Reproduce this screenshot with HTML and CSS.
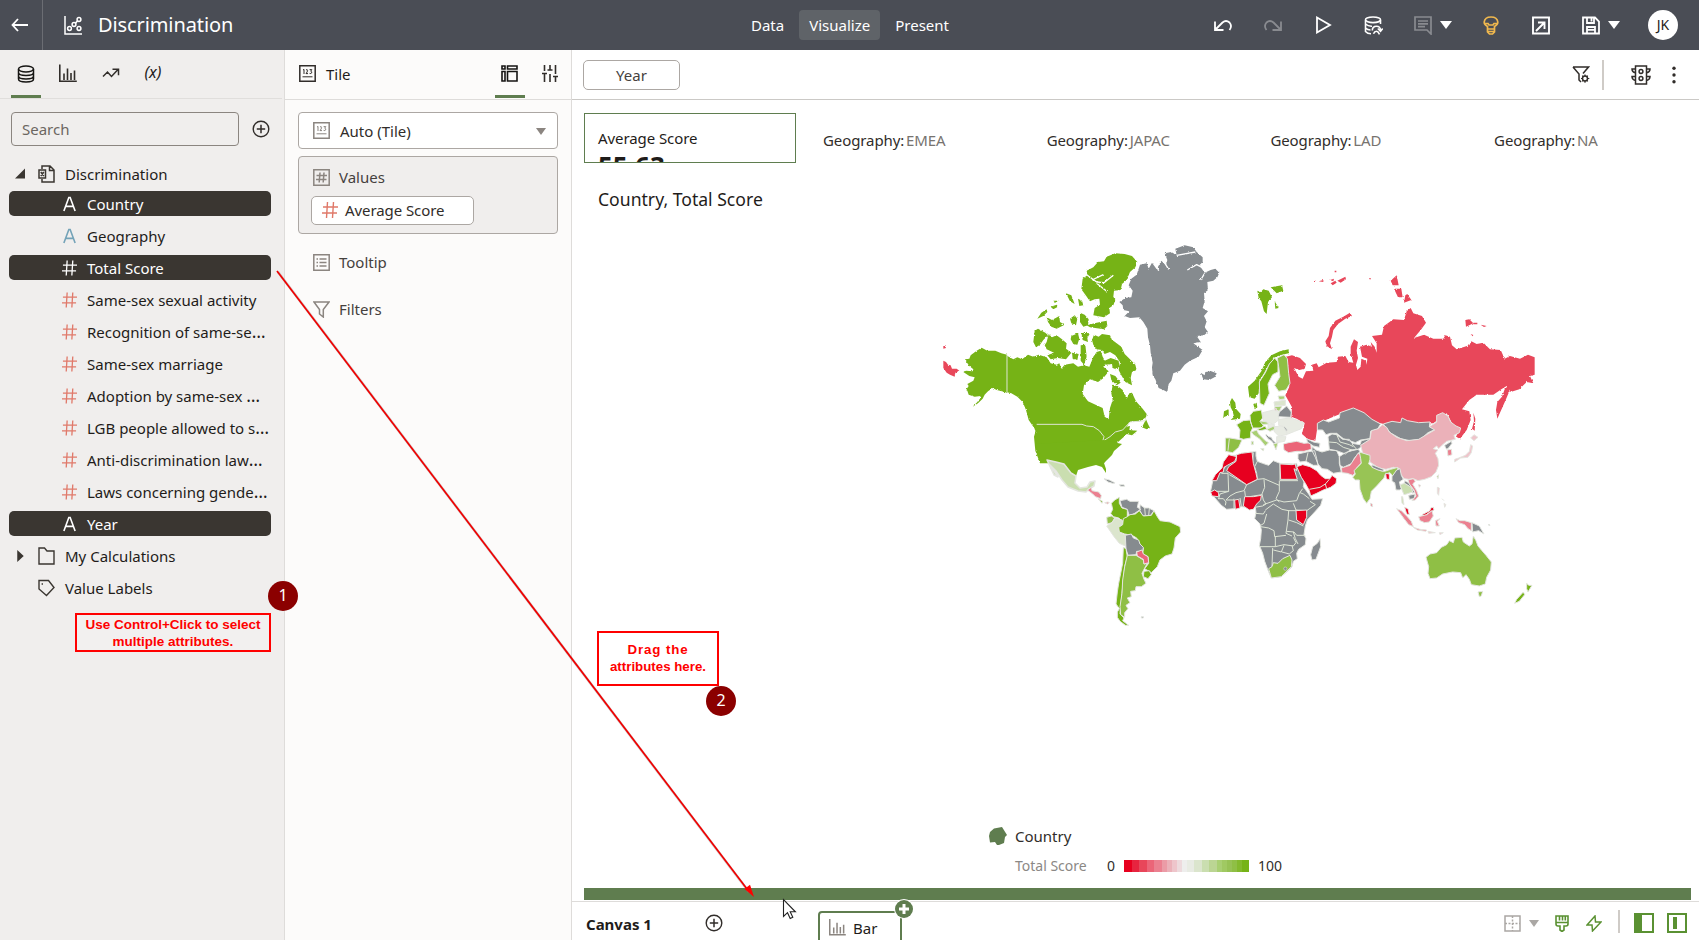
FILE: index.html
```html
<!DOCTYPE html>
<html lang="en">
<head>
<meta charset="utf-8">
<title>Discrimination</title>
<link rel="stylesheet" href="styles.css">
</head>
<body>
<svg class="defs" width="0" height="0">
  <symbol id="i-hash" viewBox="0 0 16 16"><path d="M5.5 0L4.5 16M11.5 0L10.500 16M1 5h15M0 11h15" fill="none" stroke="currentColor" stroke-width="1.4"/></symbol>
  <symbol id="i-attr" viewBox="0 0 16 16"><path d="M2 15.500L7.300 1h1.400L14 15.500M4 10.500h8" fill="none" stroke="currentColor" stroke-width="1.700"/></symbol>
  <symbol id="i-tile" viewBox="0 0 17 17"><path d="M.8 .8h15.400v15.400H.8z" fill="none" stroke="currentColor" stroke-width="1.500"/><path d="M4 5l1-.6V9M7 5q1.500-1 1.600.3Q8.500 7 7 8.600h2M10.600 4.600h2.200l-1.100 1.600q1.500.3 1 1.700-.6 1-2.100.5M3.500 11.800h10" fill="none" stroke="currentColor"/></symbol>
  <symbol id="i-bars" viewBox="0 0 18 18"><path d="M.8 .5v16.700h17M5 16V9.500M8.500 16V4.500M12 16V9M15.500 16V6.500" fill="none" stroke="currentColor" stroke-width="1.600"/></symbol>
  <symbol id="i-add" viewBox="0 0 18 18"><circle cx="9" cy="9" r="7.800" fill="none" stroke="currentColor" stroke-width="1.400"/><path d="M9 4.800v8.400M4.800 9h8.400" stroke="currentColor" stroke-width="1.500"/></symbol>
</svg>

<header class="topbar">
  <div class="back"><svg width="17" height="14" viewBox="0 0 17 14"><path d="M7 1L1.500 7 7 13M1.500 7H17" fill="none" stroke="#fff" stroke-width="1.800"/></svg></div>
  <svg class="logo" width="19" height="19" viewBox="0 0 19 19" fill="none" stroke="#fff" stroke-width="1.500"><path d="M1 0v18h17"/><circle cx="5.500" cy="12.500" r="1.900"/><circle cx="10" cy="8.500" r="1.900"/><circle cx="15" cy="3.500" r="1.900"/><circle cx="15" cy="12.500" r="1.900"/><path d="M11.400 7.100l2.200-2.200"/></svg>
  <h1>Discrimination</h1>
  <nav class="modes"><span>Data</span><span class="on">Visualize</span><span>Present</span></nav>
  <div class="tools">
    <svg class="t1" width="20" height="20" viewBox="0 0 20 20" fill="none" stroke="#fff" stroke-width="1.800"><path d="M2 6.500V15h8.500M2.500 14.500L9.500 7.500Q13 4.500 16.500 7.500 19.500 11 16.500 15"/></svg>
    <svg class="t2" width="20" height="20" viewBox="0 0 20 20" fill="none" stroke="#898b90" stroke-width="1.800"><path d="M18 6.500V15H9.500M17.500 14.500L10.500 7.500Q7 4.500 3.500 7.500 .5 11 3.500 15"/></svg>
    <svg class="t3" width="16" height="18" viewBox="0 0 16 18" fill="none" stroke="#fff" stroke-width="1.800"><path d="M1 1.500L14 9 1 16.500z"/></svg>
    <svg class="t4" width="19" height="19" viewBox="0 0 19 19" fill="none" stroke="#fff" stroke-width="1.600"><ellipse cx="9" cy="3.800" rx="7.500" ry="2.800"/><path d="M1.500 4v11.500q2 2.300 5.500 2.300M16.500 4v4M1.500 8q3 2.500 6.500 2.200M1.500 12q2 2 5 2M8.300 14.500q0-4.300 4.200-4.300 3.800 0 4 4M13.800 12.500l2.700 2.700 2.200-2.700M9.500 17.800q1-2.500 3-2.500 1.500 0 3 3"/></svg>
    <svg class="t5" width="18" height="19" viewBox="0 0 18 19" fill="none" stroke="#898b90" stroke-width="1.700"><path d="M1 1h16v17l-4-4H1zM4 5h10M4 7.800h10M4 10.600h7"/></svg>
    <i class="caret c1"></i>
    <svg class="t6" width="16" height="19" viewBox="0 0 16 19" fill="none" stroke="#f0b84e" stroke-width="1.700"><path d="M4.500 13V10.500Q1 8.500 1.200 6 1.800 1 8 1t6.800 5q.2 2.500-3.300 4.500V13zM2.500 7.500h2.500l1 1.500h4l1-1.500h2.500M4.500 13v3l2 2h3l2-2v-3M5 15.500h6"/></svg>
    <svg class="t7" width="18" height="19" viewBox="0 0 18 19" fill="none" stroke="#fff" stroke-width="1.900"><path d="M1 1.500h16v16H1zM6 6.500h6.500V13M12.500 6.500L4 15"/></svg>
    <svg class="t8" width="18" height="19" viewBox="0 0 18 19" fill="none" stroke="#fff" stroke-width="1.800"><path d="M1 1.500h12l4 4v12H1zM5 2v5h7V2M9.500 2.500v3M5 17v-6h8v6M5 13.800h8"/></svg>
    <i class="caret c2"></i>
    <b class="avatar">JK</b>
  </div>
</header>

<main>
  <aside class="data">
    <div class="tabs">
      <span class="tab on"><svg width="18" height="18" viewBox="0 0 18 18" fill="none" stroke="#161513" stroke-width="1.500"><ellipse cx="9" cy="4" rx="7.500" ry="3"/><path d="M1.500 4v10c0 4 15 4 15 0V4M1.500 7.500c0 4 15 4 15 0M1.500 11c0 4 15 4 15 0"/></svg></span>
      <span class="tab"><svg width="18" height="18" color="#312d2a"><use href="#i-bars"/></svg></span>
      <span class="tab"><svg width="18" height="18" viewBox="0 0 18 18" fill="none" stroke="#312d2a" stroke-width="1.500"><path d="M1 12.500l4.500-4.500L9.500 12.500 16 5.500M10.500 5.300h6v6"/></svg></span>
      <span class="tab fx">(x)</span>
    </div>
    <div class="find"><div class="search">Search</div><svg width="18" height="18" color="#312d2a"><use href="#i-add"/></svg></div>
    <ul class="tree">
      <li class="root first"><svg class="arrow" width="11" height="11" viewBox="0 0 11 11"><path d="M10 0v10H0z" fill="#3a3631"/></svg><svg class="ric" width="17" height="18" viewBox="0 0 17 18" fill="none" stroke="#3a3631" stroke-width="1.500"><path d="M4 4V1h8l4 4v12H4v-3M11.500 1v4.500H16M1 5h6.500v8H1zM2.800 7l3 4M5.800 7l-3 4"/></svg>Discrimination</li>
      <li class="sel"><svg><use href="#i-attr"/></svg><span>Country</span></li>
      <li class="a"><svg><use href="#i-attr"/></svg><span>Geography</span></li>
      <li class="sel"><svg><use href="#i-hash"/></svg><span>Total Score</span></li>
      <li><svg><use href="#i-hash"/></svg><span>Same-sex sexual activity</span></li>
      <li><svg><use href="#i-hash"/></svg><span>Recognition of same-se<i>…</i></span></li>
      <li><svg><use href="#i-hash"/></svg><span>Same-sex marriage</span></li>
      <li><svg><use href="#i-hash"/></svg><span>Adoption by same-sex <i>…</i></span></li>
      <li><svg><use href="#i-hash"/></svg><span>LGB people allowed to s<i>…</i></span></li>
      <li><svg><use href="#i-hash"/></svg><span>Anti-discrimination law<i>…</i></span></li>
      <li><svg><use href="#i-hash"/></svg><span>Laws concerning gende<i>…</i></span></li>
      <li class="sel"><svg><use href="#i-attr"/></svg><span>Year</span></li>
      <li class="root"><svg class="arrow" width="11" height="13" viewBox="0 0 11 13"><path d="M2 0l7 6.500L2 13z" fill="#3a3631"/></svg><svg class="ric" width="17" height="18" viewBox="0 0 17 18" fill="none" stroke="#3a3631" stroke-width="1.400"><path d="M1 1h5.500l2.500 3h7v13H1z"/></svg>My Calculations</li>
      <li class="root"><svg class="arrow" width="11" height="11"></svg><svg class="ric" width="17" height="18" viewBox="0 0 17 18" fill="none" stroke="#3a3631" stroke-width="1.400"><path d="M1 1.500h9.500l5.500 7-7.500 8L1 10z"/><path d="M4.300 4.300v1.400"/></svg>Value Labels</li>
    </ul>
  </aside>

  <aside class="grammar">
    <div class="ghead">
      <svg width="17" height="17" color="#312d2a"><use href="#i-tile"/></svg><span class="gt">Tile</span>
      <span class="tab on"><svg width="17" height="17" viewBox="0 0 17 17" fill="none" stroke="#161513" stroke-width="1.600"><path d="M1 1h3v3H1zM6.500 1H16v3H6.500zM1 6.500h3V16H1zM6.500 6.500H16V16H6.500z"/></svg></span>
      <svg class="sliders" width="16" height="17" viewBox="0 0 16 17" fill="none" stroke="#312d2a" stroke-width="1.600"><path d="M2.500 0v6M2.500 8v9M0 8.500h5M8 0v4M8 9v8M5.500 5h5M8 3v2M13.500 0v9M13.500 11v6M11 11.500h5"/></svg>
    </div>
    <div class="select"><svg width="17" height="17" color="#8b8580"><use href="#i-tile"/></svg><span>Auto (Tile)</span><i class="caret"></i></div>
    <div class="values">
      <div class="row"><svg width="17" height="17" viewBox="0 0 17 17" fill="none" stroke="#8b8580" stroke-width="1.500"><path d="M.8 .8h15.400v15.400H.8zM7 3.500l-.8 10M11 3.500l-.8 10M3.500 6.500h10.500M3 10.500h10.500"/></svg><span>Values</span></div>
      <div class="chip"><svg width="16" height="16" color="#e0796a"><use href="#i-hash"/></svg><span>Average Score</span></div>
    </div>
    <div class="row tip"><svg width="17" height="17" viewBox="0 0 17 17" fill="none" stroke="#8b8580" stroke-width="1.500"><path d="M.8 .8h15.400v15.400H.8zM3.500 5h1.500M6.500 5h7M3.500 8.500h1.500M6.500 8.500h7M3.500 12h1.500M6.500 12h7"/></svg><span>Tooltip</span></div>
    <div class="row flt"><svg width="17" height="17" viewBox="0 0 17 17" fill="none" stroke="#8b8580" stroke-width="1.500"><path d="M1 1h15L10.300 8.500V16L6.500 13V8.500z"/></svg><span>Filters</span></div>
  </aside>

  <section class="canvas">
    <div class="filterbar">
      <span class="pill">Year</span>
      <div class="fic">
        <svg width="18" height="18" viewBox="0 0 18 18" fill="none" stroke="#312d2a" stroke-width="1.500"><path d="M1 1h15.500L11 7.500M1 1l6 7v6l2 2"/><circle cx="13" cy="12.500" r="2.500"/><path d="M13 8.500v1.500M13 15v1.800M9 12.500h1.500M15.500 12.500h1.800M10.200 9.700l1 1M14.800 14.300l1 1M15.800 9.700l-1 1M11.200 14.300l-1 1" stroke-width="1.200"/></svg>
        <i class="sep"></i>
        <svg class="light" width="20" height="20" viewBox="0 0 20 20" fill="none" stroke="#312d2a" stroke-width="1.500"><path d="M4.500 1h11v18h-11zM4.500 4H1q0 3 3.500 4M15.500 4H19q0 3-3.500 4M4.500 11.500H1q0 3 3.500 4M15.500 11.500H19q0 3-3.500 4"/><circle cx="10" cy="6.500" r="1.900"/><circle cx="10" cy="13.500" r="1.900"/></svg>
        <svg width="4" height="18" viewBox="0 0 4 18" fill="#312d2a"><circle cx="2" cy="2.300" r="1.700"/><circle cx="2" cy="9" r="1.700"/><circle cx="2" cy="15.700" r="1.700"/></svg>
      </div>
    </div>
    <div class="tiles">
      <div class="kpi"><div class="lbl">Average Score</div><div class="num">55.63</div></div>
      <div class="geo">Geography: <em>EMEA</em></div><div class="geo">Geography: <em>JAPAC</em></div><div class="geo">Geography: <em>LAD</em></div><div class="geo">Geography: <em>NA</em></div>
    </div>
    <h2>Country, Total Score</h2>
    <svg class="map" width="1108" height="410" viewBox="584 220 1108 410">
      <defs><filter id="coast" x="0" y="0" width="100%" height="100%"><feTurbulence type="fractalNoise" baseFrequency=".22" numOctaves="2" seed="4"/><feDisplacementMap in="SourceGraphic" scale="7" xChannelSelector="R" yChannelSelector="G"/></filter></defs>
      <!-- North America, Greenland, Iceland -->
      <g transform="translate(930 230) scale(.33333)">
        <g filter="url(#coast)">
        <path class="ru" d="M40 392L48 396 54 404 62 406 66 416 80 416 88 422 76 428 74 440 60 434 50 428 40 414ZM40 348h6l2 6-8 2z"/>
        <path class="g1" d="M105 388L118 386 122 376 140 362 155 353 172 362 196 362 214 370 231 374 231 488 216 484 200 480 188 474 174 484 164 494 158 506 144 520 126 532 140 518 150 506 152 498 134 500 116 494 112 482 108 480 116 468 112 462 130 452 134 442 118 438 100 426 108 422 128 424 130 418 118 408 108 394Z"/>
        <path class="g1" d="M228 376L250 388 262 382 276 388 294 374 310 380 326 374 350 382 362 400 380 404 388 400 394 416 404 404 430 400 444 410 462 406 478 410 484 396 490 380 500 366 512 362 518 380 528 398 520 410 536 424 528 434 518 446 504 456 480 448 462 466 458 492 474 514 500 526 518 534 524 560 536 568 540 534 548 510 544 490 548 464 566 470 578 480 590 506 598 490 606 488 618 514 638 536 650 552 648 562 630 574 600 576 590 590 600 588 598 600 622 602 606 616 590 612 582 620 560 640 520 662 520 700H330L316 662 312 620 316 606 314 596 296 570 288 540 278 516 262 500 244 490 228 486Z"/>
        <path class="g1" d="M636 592L648 568 654 582 660 594 650 598ZM486 330L492 314 506 320 516 312 540 316 546 330 552 334 574 350 584 372 600 388 616 404 620 420 606 426 602 444 606 466 586 456 574 436 566 420 570 396 556 376 540 366 524 372 516 360 500 358 490 344ZM524 392L542 384 566 392 568 410 558 418 548 414 546 402 526 404ZM540 432L556 438 572 458 560 466 544 450Z"/>
        <path class="g1" d="M356 312L366 322 380 316 396 328 410 340 408 356 424 368 408 388 384 384 362 388 352 376 372 368 350 358 344 346 350 336ZM314 302L324 296 346 308 354 316 340 330 330 344 318 352 310 336ZM424 318l20-8 4 16-6 18-12-2-8-14zM454 308L480 310 472 324 474 336 458 330ZM452 346L466 344 470 380 462 404 452 392ZM426 368l20 4-4 18-14-4z"/>
        <path class="g1" d="M470 286L500 278 530 272 532 288 522 298 480 292ZM450 248l14 6 12 14-2 18-14 4-10-14zM350 262L366 270 388 258 390 276 404 284 380 296 364 290 354 276ZM322 266L334 248 350 238 352 246 340 258ZM420 266l14-10 8 10-4 20-14-6zM408 190L424 196 434 222 420 214ZM444 206l12 6 4 14-12 2zM370 212h14l-8 6zM362 230l18-6 4 6-14 8z"/>
        <path class="g1" d="M458 146L472 136 470 122 490 112 504 96 522 94 530 80 556 70 584 72 606 78 622 96 616 112 600 126 590 150 576 162 572 180 552 182 550 200 556 210 550 226 538 234 540 250 522 262 490 256 494 234 510 224 508 206 494 208 480 214 466 194 454 178Z"/>
        <path class="cut" d="M470 134L500 156 522 158 550 136M500 160L530 184M486 150L520 134"/>
        <path class="na" d="M568 216L586 204 604 202 608 182 596 166 604 146 620 134 630 104 650 100 656 116 666 98 680 118 694 92 708 106 712 90 704 70 724 66 740 76 736 56 764 46 790 52 800 66 818 82 818 96 808 106 824 128 842 120 856 116 868 128 862 142 850 152 832 156 834 180 822 190 824 214 818 234 834 244 822 258 830 274 824 292 834 306 822 316 800 318 812 336 790 340 818 360 806 380 780 392 764 404 750 422 730 430 724 452 716 462 712 486 700 480 686 474 676 448 668 436 666 412 668 398 662 368 660 346 654 322 652 296 640 276 628 262 600 264 584 258 598 244 580 240 578 226Z"/>
        <path class="cut" d="M740 76L796 66M772 120L800 104 816 112M812 150L824 130M700 92L716 118M676 100L686 122"/>
        <path class="na" d="M812 428L824 436 826 426 844 424 860 430 856 440 838 450 820 448Z"/>
        </g>
        <path class="bd" d="M231 374V486M320 583H456L470 588 490 590 508 602 522 620 518 634 540 620 556 606 578 600 600 576 648 572"/>
      </g>
      <path class="g1 plain" d="M1035 444L1037 449 1041 454 1047 460 1056 462 1064 464 1071 473 1076 476 1078 470 1088 467 1096 465 1102 467 1106 473 1106 469 1104 463 1107 460 1112 455 1114 451 1122 444 1104 440Z"/>
      <path class="g5" d="M1047 460L1056 462 1064 464 1071 473 1076 476 1075 483 1080 488 1087 487 1090 482 1095 481 1094 486 1089 489 1086 492 1078 491 1068 487 1062 480 1056 471 1050 465 1058 477 1054 475Z"/>
      <!-- South America, Africa, Arabia -->
      <g transform="translate(1080 420) scale(.33333)">
        <path class="p3" d="M22 210L34 202 36 212 56 216 64 226 62 236 46 230 38 222ZM74 248l8 4 6-4-4-2z"/>
        <path class="g2" d="M54 236l14 8-2 6z"/>
        <path class="na" d="M72 176L88 180 104 188 102 191 84 186ZM118 194h14l2 5h-12z"/>
        <path class="g1" d="M94 250L104 240 118 232 118 250 126 264 142 268 142 290 128 304 116 294 100 290 92 280 98 268Z"/>
        <path class="na" d="M120 242L140 238 150 244 176 244 172 262 182 268 164 280 148 288 142 268 126 262ZM180 254L194 264 206 264 222 272 212 286 188 288 180 272Z"/>
        <path class="bd" d="M194 264L196 286M208 266L206 286"/>
        <path class="g2" d="M80 292L94 288 104 294 96 308 82 312Z"/>
        <path class="g6" d="M80 318L96 308 106 294 126 300 130 312 116 324 122 340 136 344 136 378 118 370 102 350Z"/>
        <path class="g1" d="M130 296L142 290 150 284 166 282 178 272 190 288 214 286 222 272 232 290 240 302 270 306 300 320 302 336 286 354 282 384 276 402 256 408 240 420 232 440 214 458 194 446 206 430 204 410 188 402 190 384 180 374 170 354 156 346 134 342 118 336 116 322 128 314Z"/>
        <path class="na" d="M136 346L154 342 160 354 176 360 180 372 190 382 188 394 170 394 168 404 144 406 138 388Z"/>
        <path class="g1" d="M192 454L208 452 214 464 204 476 190 470ZM130 382L138 386 142 410 134 440 130 480 126 520 122 560 120 582 132 594 128 602 146 616 136 616 120 604 112 592 112 576 118 566 108 552 112 516 116 490 122 460 128 430Z"/>
        <path class="g2" d="M142 406L168 406 190 420 192 432 202 430 192 448 186 460 192 478 198 490 184 500 168 500 166 512 152 514 154 530 142 534 150 548 138 556 144 566 134 578 134 592 122 584 120 560 126 520 128 480 134 440Z"/>
        <path class="p2" d="M170 396L186 390 190 402 204 410 206 428 192 432 190 418 172 408Z"/>
        <path class="na" d="M436 140L440 120 452 106 468 106 484 100 516 96 528 94 528 108 532 124 548 130 566 136 580 122 600 130 640 132 650 130 656 152 672 186 670 200 686 222 696 238 728 236 722 256 706 274 682 300 676 318 672 344 678 356 676 374 656 388 650 400 652 416 640 424 636 440 620 456 604 470 574 474 566 456 554 424 548 400 538 376 542 356 544 330 540 312 524 296 528 278 526 262 512 268 500 262 484 260 462 266 440 268 424 256 410 240 398 226 392 212 398 184 416 158 430 148ZM720 356L722 380 708 418 696 420 692 404 698 380 712 370ZM184 590h6v4h-6z"/>
        <path class="bd" d="M398 214L446 214 444 158M424 160H444M448 164L500 194 532 178 552 176 598 196M532 124L524 140 530 160 532 178M520 98L518 120M600 130V182H654M598 182V214L588 236 598 246M552 178L554 202 546 222 550 240 558 252 548 258 524 262M500 194L492 212 468 218 450 228 438 240M446 214L420 222 416 236M494 212L496 228M414 236L430 236 438 246 436 256M438 240H462M462 236V264M480 234L484 260M546 224L496 232M590 240L612 246 650 242 658 220 668 206M550 254L590 240M556 270L580 252 606 268 626 272M526 280L550 282 556 272M560 282L552 310 542 316M626 272L624 300 618 340 636 348M542 320L566 324 582 332 584 350 618 346M586 350L586 380 538 380M578 384L576 440M586 380L612 374 640 378 648 368 640 352M612 376L604 396 580 390M606 396L628 402 640 392 636 376M640 336L646 356 654 372M626 300L650 308 670 318M624 272L650 272 650 300M640 250L648 270 680 272 706 254 690 244M660 218L670 222 688 236M676 346L650 346 642 336 620 334"/>
        <path class="p0" d="M446 104L470 110 464 124 442 136 432 142 430 156 420 158 410 182 396 182 406 164 426 144 430 126ZM470 104L484 100 516 96 520 130 528 160 532 178 500 194 440 152 446 140 468 124ZM600 132L636 134 646 132 650 152 642 146 652 178 602 178ZM392 216L404 210 416 218 416 230 396 228ZM464 240l12-2 4 26-14 4zM494 230L520 230 544 226 542 240 530 252 520 268 508 270 490 258ZM648 272L680 270 680 292 670 314 650 300Z"/>
        <path class="g2" d="M566 446L576 440 580 428 594 430 608 416 630 406 636 420 634 440 618 456 604 470 574 474Z"/>
        <circle class="na" cx="616" cy="446" r="5"/>
        <path class="p0" d="M650 140L668 134 690 140 710 152 722 166 736 176 750 176 756 166 770 176 768 190 752 202 730 210 710 220 692 228 688 212 676 190 664 172Z"/>
        <path class="bd" d="M688 208L720 202 736 192 740 206M736 192L748 178"/>
      </g>
      <!-- Europe, Russia -->
      <g transform="translate(1200 230) scale(.33333)">
        <g filter="url(#coast)">
        <path class="ru" d="M256 496L268 470 266 440 262 410 258 380 276 376 300 384 318 402 314 416 298 420 282 414 296 440 308 446 318 424 340 422 336 404 350 400 356 412 380 398 410 396 414 380 436 378 446 396 460 398 452 372 452 350 462 328 474 336 470 362 474 384 468 404 472 420 482 410 484 386 498 392 500 404 502 386 486 380 480 350 500 344 516 350 512 336 524 350 530 368 530 340 516 318 546 314 552 288 580 268 612 270 620 244 632 234 640 250 666 258 678 278 664 298 642 324 672 314 700 326 730 326 736 316 750 320 756 346 770 358 808 346 814 334 830 342 850 338 870 358 902 360 914 386 930 378 960 386 984 374 1004 382 1004 434 990 438 1000 460 980 456 958 478 932 486 920 468 904 478 880 494 830 494 808 510 786 538 808 544 812 570 800 600 780 626 768 620 780 596 762 590 740 550 700 580 552 582 420 552 354 580 346 632 324 628 306 612 314 580 290 566 274 560 276 532Z"/>
        <path class="ru" d="M926 466L928 484 916 512 902 544 892 566 888 540 892 516 906 500 914 478ZM820 548L826 566 824 602 816 596 822 574ZM396 358L380 348 376 334 386 318 390 294 406 272 430 260 450 248 456 258 436 266 414 282 400 300 396 320 390 340ZM572 152L590 136 596 166 578 166ZM582 176L604 176 608 202 594 202ZM616 196L622 192 634 210 612 218ZM796 270L808 268 820 280 798 290ZM820 278h12v5h-12zM842 284l18 4-8 3zM812 312l10 4-4 3zM342 152h6v4h-6zM356 154l14-4v6zM390 150l12-4-2 8zM392 160l14-8 4 6-12 8zM412 152l24-12 2 8-16 10zM404 122h5v5h-5zM508 144h5v4h-5z"/>
        <path class="g1" d="M172 182L182 186 190 178 206 182 216 202 204 216 200 252 192 244 184 214 176 204ZM212 172L246 166 250 182 230 190ZM224 214l12 20-10 2zM144 470L164 452 184 424 196 396 214 376 240 364 266 358 266 370 240 376 220 384 206 404 192 430 178 452 176 490 164 506 148 502ZM96 504L106 518 108 536 122 552 120 566 92 570 102 560 98 544 92 532 90 516ZM72 544L86 538 86 556 70 562ZM160 522l10-4 2 14-8 6z"/>
        </g>
        <path class="g1" d="M178 456L196 428 208 402 224 384 234 396 234 426 218 434 204 462 208 490 192 526 180 520Z"/>
        <path class="g2" d="M232 384L252 374 262 386 266 430 270 460 258 480 236 484 224 466 240 440 236 410Z"/>
        <path class="g3" d="M234 498h20v9l-16 2zM224 530l22-2-8 16-14-6z"/>
        <path class="g6" d="M222 516L256 510 256 526 224 528Z"/>
        <path class="g7" d="M188 548L220 540 238 546 236 570 220 582 190 574ZM236 568L272 564 312 578 304 596 284 604 264 612 250 590 236 586ZM222 590L250 588 262 614 236 618 222 604ZM230 620h28l-4 14-24 4zM204 582l20 2-6 14-14-2z"/>
        <path class="na" d="M234 560L238 546 260 528 274 546 272 562ZM252 588l10 12-2 4-8-10zM198 612l8 8 8 2 4 8 10 10-6 2-8-10-8-4-8-10z"/>
        <path class="g3" d="M178 572L200 576 206 582 186 584ZM154 606L170 600 176 612 196 632 206 638 196 648 180 628 160 614ZM200 598l22-10 2 10-14 6zM220 642L234 638 228 660ZM154 634h6v10h-6zM182 656h10l-2 6z"/>
        <path class="g1" d="M150 556L160 544 184 540 188 564 180 574 190 586 184 594 158 594 152 576ZM110 584L130 572 150 570 158 594 152 606 152 624 130 628 118 624 120 600ZM172 598L196 588 200 598 180 602Z"/>
        <path class="g2" d="M76 624L90 624 126 630 116 652 98 668 76 664Z"/>
        <path class="bd" d="M88 626L84 662"/>
        <path class="p2" d="M250 642L266 638 290 634 312 640 332 638 334 658 312 664 290 664 266 668 252 660ZM222 534l8 2-2 6z"/>
      </g>
      <!-- Asia and Oceania -->
      <g transform="translate(1290 400) scale(.33333)">
        <path class="na" d="M24 162L50 156 74 152 80 176 84 196 70 196 48 184 30 186 24 176ZM66 140L78 150 96 156 118 150 140 152 148 170 148 190 154 216 130 220 112 208 96 206 84 192 76 172 66 152ZM50 116L70 126 90 130 88 142 70 138 52 126ZM114 110L126 102 140 104 158 118 178 118 186 130 210 134 214 122 240 116 240 128 214 140 204 148 180 150 166 162 140 152 118 148 116 128ZM82 70L100 60 116 66 148 54 150 38 190 24 222 38 234 48 246 58 272 72 262 88 242 94 240 116 212 120 196 128 178 122 160 116 140 100 122 100 108 104 98 90 82 90ZM148 170L166 158 186 152 204 148 210 154 192 176 186 190 160 202 150 196ZM280 72L306 64 332 68 336 54 352 62 386 68 420 66 418 80 436 88 414 98 392 118 360 122 332 116 300 98Z"/>
        <path class="bd" d="M48 184L54 158M116 126L140 128 160 142 186 150M140 104L150 126 178 134 190 140M186 132L200 148"/>
        <path class="p3" d="M154 204L180 196 192 178 204 160 212 164 214 188 200 204 194 220 188 226 172 220 156 218Z"/>
        <path class="p4" d="M212 136L240 118 244 92 264 86 278 74 290 82 298 96 320 112 350 122 386 118 406 106 434 90 418 80 440 66 440 46 458 38 474 48 482 66 498 78 512 84 508 98 492 106 496 118 470 124 456 136 446 146 440 138 430 146 444 150 436 160 444 176 446 196 438 216 424 230 404 238 384 242 370 236 356 238 342 236 332 222 328 206 310 202 288 208 266 204 240 186 236 168 218 160Z"/>
        <path class="g3b" d="M208 156L240 166 240 178 236 192 250 202 272 212 284 214 302 208 324 202 322 214 308 228 300 218 286 222 282 234 260 258 244 274 240 296 230 310 220 296 210 268 208 240 196 240 188 232 196 222 192 212 214 190 212 176Z"/>
        <path class="na" d="M246 194L280 208 280 214 264 210 246 202ZM306 230L320 210 330 206 334 226 340 238 328 246 334 266 330 270 318 270 314 248 306 244ZM356 286L376 282 372 296 358 298ZM344 242l12 6 18 28-6 4-12-22-14-6zM464 136L484 124 486 130 476 144 470 148 466 142ZM546 368L568 378 582 402 566 392 548 396ZM596 372l4 4-3 1z"/>
        <path class="p0" d="M287 220L298 222 298 240 289 236ZM344 322L354 326 358 344 350 342ZM396 344L420 332 422 324 430 322 432 330 414 340 404 348Z"/>
        <path class="g5" d="M330 254L344 250 364 262 368 276 350 282 342 284 336 270ZM334 290h4l4 24-6-4z"/>
        <path class="p3" d="M354 240L370 236 376 244 368 252 380 272 386 288 376 300 366 302 378 288 372 270 358 252ZM320 326L334 332 352 350 364 364 370 380 356 374 342 356ZM370 382L390 388 410 390 408 394 382 390ZM386 350L410 344 426 332 430 348 418 366 404 368 390 362ZM436 362L450 356 442 364 448 378 438 378ZM498 356L510 362 524 362 544 368 544 392 534 386 524 374 506 368ZM472 150L484 148 486 164 474 168ZM241 310l6 2 1 8-6-2zM386 254l6 2-4 6z"/>
        <path class="p5" d="M494 178L506 174 526 166 538 154 542 134 548 138 544 158 534 172 512 174 494 186ZM542 114L552 104 564 112 552 122ZM442 262l6 2-2 22-4-6zM462 310l6 4-4 8zM414 394l22 4-20 2zM448 398h12l-10 6zM456 296l6 6"/>
        <path class="g2" d="M408 472L420 462 440 458 454 442 470 434 478 422 490 428 494 414 516 412 520 426 538 438 546 432 550 408 558 422 564 438 576 452 588 466 604 486 602 510 590 532 586 552 568 558 544 554 538 538 528 524 518 534 512 518 488 516 458 522 440 534 420 536 414 520 416 500ZM564 576L578 574 574 588 568 590ZM441 230l5-6-2 12z"/>
        <path class="g1" d="M710 550L716 556 726 556 714 576 710 566ZM700 576L704 584 688 604 674 610 680 598Z"/>
      </g>
    </svg>
    <div class="legend">
      <div class="l1"><svg width="18" height="18" viewBox="0 0 18 18"><path d="M1 5L5 1.500 13 0l5 8-2 2-1 6-5 2H8l-2-3-5 .5L0 9z" fill="#5f7d4f"/></svg>Country</div>
      <div class="l2"><span class="ts">Total Score</span><span>0</span><div class="ramp"></div><span>100</span></div>
    </div>
    <div class="drop"></div>
    <footer>
      <b class="cname">Canvas 1</b>
      <svg class="cadd" width="18" height="18" color="#312d2a"><use href="#i-add"/></svg>
      <div class="drag"><svg width="17" height="18" color="#8b8580"><use href="#i-bars"/></svg>Bar
        <svg class="plus" width="20" height="20" viewBox="0 0 20 20"><circle cx="10" cy="10" r="9" fill="#5f7d4f"/><path d="M10 5v10M5 10h10" stroke="#fff" stroke-width="3"/></svg></div>
      <div class="ftools">
        <svg width="17" height="17" viewBox="0 0 17 17" fill="none" stroke="#aaa7a4" stroke-width="1.500"><path d="M1 1h15v15H1z"/><path d="M8.500 1v15M1 8.500h15" stroke-dasharray="2 1.500"/></svg>
        <i class="caret"></i>
        <svg class="brush" width="14" height="17" viewBox="0 0 14 17" fill="none" stroke="#5a9132" stroke-width="1.600"><path d="M1 1h12v8q0 2-2 2H9v4l-2 1.500L5 15v-4H3q-2 0-2-2zM1 7.500h12M4.500 1v4.500M7.500 1v4.500M10.300 1v4.500"/></svg>
        <svg class="bolt" width="16" height="17" viewBox="0 0 16 17" fill="none" stroke="#5a9132" stroke-width="1.500"><path d="M9 1L1 10h5l.5 6L15 7H9.500z"/></svg>
        <i class="sep"></i>
        <svg class="pa" width="20" height="20" viewBox="0 0 20 20"><path d="M1 1h18v18H1z" fill="#fff" stroke="#5a9132" stroke-width="2"/><path d="M1 1h7v18H1z" fill="#5a9132"/></svg>
        <svg class="pb" width="20" height="20" viewBox="0 0 20 20"><path d="M1 1h18v18H1z" fill="#fff" stroke="#5a9132" stroke-width="2"/><path d="M6 4h4v12H6z" fill="#5a9132"/></svg>
      </div>
    </footer>
  </section>
</main>

<svg class="over" width="1699" height="940" viewBox="0 0 1699 940">
  <path d="M278 272L749 892" stroke="#999" stroke-opacity=".45" stroke-width="2.600"/>
  <path d="M277 271L747 889" stroke="#f00000" stroke-width="1.700"/>
  <path d="M754 897L744.500 889 750 884.700z" fill="#f00"/>
  <path d="M783.500 899.500v17l4-3.800 2.700 5.800 2.600-1.300-2.600-5.400h5.200z" fill="#fff" stroke="#222" stroke-width="1.100"/>
</svg>
<div class="note n1">Use Control+Click to select<br>multiple attributes.</div>
<div class="note n2"><span>Drag the</span><br>attributes here.</div>
<div class="badge b1">1</div>
<div class="badge b2">2</div>
</body>
</html>
```
FILE: styles.css
```css
*{box-sizing:border-box}
body{margin:0;width:1699px;height:940px;overflow:hidden;position:relative;display:flex;flex-direction:column;font:15px/20px "Noto Sans","Open Sans",sans-serif;color:#1f1c1a;background:#fff}
svg{flex:none;display:block}
.defs{position:absolute}
h1,h2{margin:0;font-weight:400}
.caret{border:6px solid transparent;border-top:8px solid #fff;border-bottom:0;flex:none;width:0;height:0}

.topbar{height:50px;flex:none;background:#4a4d55;color:#fff;display:flex;align-items:center;position:relative}
.back{width:43px;height:50px;border-right:1px solid #6b6d73;display:flex;align-items:center;padding-left:11px}
.logo{margin:0 15px 0 21px}
h1{font-size:20px;width:641px;letter-spacing:-.1px}
.modes{display:flex;align-items:center;margin-left:2px}
.modes span{height:30px;line-height:30px;padding:0 10px;border-radius:4px;margin-right:5px}
.modes .on{background:#5f6368}
.tools{display:flex;align-items:center;margin-left:auto;padding-right:21px}
.t2{margin-left:30px}.t3{margin-left:33px}.t4{margin-left:32px}.t5{margin-left:31px}.c1{margin-left:8px}.t6{margin-left:31px}.t7{margin-left:33px}.t8{margin-left:32px}.c2{margin-left:8px}
.avatar{width:30px;height:30px;border-radius:50%;background:#fff;color:#1f1c1a;font-weight:400;font-size:14px;line-height:30px;text-align:center;margin-left:28px}

main{flex:1;display:flex;min-height:0}
.data{width:285px;background:#f0eeed;border-right:1px solid #dedcda;flex:none}
.tabs{height:49px;width:282px;border-bottom:1px solid #e0dedc;display:flex;padding-left:11px;gap:13px}
.tab{width:30px;height:48px;display:flex;align-items:center;justify-content:center;padding:0 2px 2px 0}
.tab.on{border-bottom:3px solid #5f7d4f;padding:2px 1px 0 0}
.fx{font-style:italic;font-size:16px;margin-left:-1px;padding-bottom:4px}
.find{display:flex;align-items:center;gap:13px;padding:13px 0 0 11px}
.search{width:228px;height:34px;border:1px solid #8b8580;border-radius:4px;padding:6px 10px;color:#6b6661}
.tree{list-style:none;margin:12px 0 0;padding:0}
.tree li{height:32px;padding-left:62px;display:flex;align-items:center;white-space:nowrap;color:#e0796a}
.tree li svg{width:15px;height:16px}
.tree li span{margin-left:10px;color:#1f1c1a}
.tree li i{font-style:normal;font-size:17.500px;line-height:16px}
.tree .a{color:#74a3b8}
.tree .sel{color:#fff;background:#3a3631;border-radius:5px;margin:3px 13px 4px 9px;height:25px;padding-left:53px}
.tree .sel span{color:#fff}
.tree .root{padding-left:15px;color:#1f1c1a}
.tree .first{margin-bottom:-2px}
.tree .root .arrow{width:11px;height:12px;margin-right:12px}
.tree .root .ric{width:17px;height:18px;margin-right:10px}

.grammar{width:287px;flex:none;background:#fcfbfa;border-right:1px solid #dedcda;padding:0 13px}
.ghead{height:50px;margin:0 -13px;padding:0 0 2px 14px;border-bottom:1px solid #dedcda;display:flex;align-items:center}
.ghead .gt{margin:0 145px 0 10px;width:24px}
.ghead .tab{height:49px;align-self:flex-start}
.ghead .tab.on{height:48px}
.sliders{margin-left:17px}
.select{margin-top:12px;height:37px;width:260px;border:1px solid #aca7a3;border-radius:4px;background:#fff;display:flex;align-items:center;padding:0 0 1px 14px;color:#312d2a}
.select span{flex:1;margin-left:10px;padding-top:1px}
.select .caret{border-top-color:#8b8580;border-width:7px 5px 0;margin:2px 11px 0 0}
.values{margin-top:7px;width:260px;height:78px;border:1px solid #aca7a3;border-radius:4px;background:#f0eeed;padding:10px 0 0 12px}
.row{display:flex;align-items:center;gap:9px;color:#45413e;padding-left:2px;height:20px}
.row span{padding-bottom:1px}
.chip{width:163px;height:29px;border:1px solid #aca7a3;border-radius:5px;background:#fff;margin-top:9px;display:flex;align-items:center;padding:0 0 1px 10px;gap:7px;color:#312d2a;letter-spacing:-.08px}
.tip{margin:18px 0 27px 13px}.flt{margin-left:13px}

.canvas{flex:1;display:flex;flex-direction:column;position:relative;background:#fff;min-width:0}
.filterbar{height:50px;border-bottom:1px solid #cbc9c6;display:flex;align-items:center;justify-content:space-between;padding:0 23px 0 11px;flex:none}
.pill{width:97px;height:30px;border:1px solid #aca7a3;border-radius:5px;text-align:center;line-height:28px;color:#45413e}
.fic{display:flex;align-items:center}
.sep{width:2px;height:30px;background:#cfcbc7;margin-left:12px}
.light{margin:0 21px 0 27px}
.tiles{display:flex;margin:13px 0 0 12px;flex:none;height:50px}
.kpi{width:212px;flex:none;height:50px;border:1px solid #5f7d4f;padding:14px 0 0 13px;overflow:hidden;margin-right:27px}
.lbl{letter-spacing:-.08px}
.num{font-weight:700;font-size:26px;line-height:30px;padding-top:3px}
.geo{width:223.700px;flex:none;padding-top:17px;color:#312d2a;letter-spacing:-.1px}
.geo em{font-style:normal;color:#77736f;margin-left:-2px}
.geo:last-child{width:130px}
h2{font-size:17.600px;line-height:24px;margin:24px 0 0 26px}
.map{margin:9px 0 0 12px}
.map path,.map circle{stroke:#e4e6e0;stroke-width:1.500;stroke-linejoin:round}
.map g g path,.map .plain{stroke:none}
.map .bd{fill:none;stroke:#dfe6d6;stroke-width:3}
.map g>path{stroke-width:3}
.map g g .cut{fill:none;stroke:#fff;stroke-width:4}
.g1{fill:#76b317}.g2{fill:#8fbf45}.g3{fill:#a9cf73}.g3b{fill:#98c455}.g5{fill:#cadeb0}.g6{fill:#dbe5cd}.g7{fill:#e8ebe3}
.na{fill:#868b8f}.ru{fill:#e8465a}.p0{fill:#e7001f}.p2{fill:#eb6578}.p3{fill:#eb8090}.p4{fill:#ebb1b9}.p5{fill:#efc4cb}
.legend{position:absolute;left:417px;top:776px;width:340px}
.l1{display:flex;gap:8px;align-items:center;color:#312d2a}
.l2{display:flex;align-items:center;margin:10px 0 0 26px;font-size:14px;color:#312d2a}
.ts{color:#8b8885;width:92px}
.ramp{width:125px;height:12px;margin:0 9px;background:linear-gradient(90deg,#e7001f 0 8px,#e7243f 8px 15px,#e8465a 15px 23px,#eb6578 23px 30px,#eb8090 30px 38px,#eb9ba6 38px 43px,#ebb1b9 43px 48px,#eec5cb 48px 53px,#eddadd 53px 58px,#eeeeed 58px 63px,#e8ebe3 63px 70px,#dbe5cd 70px 78px,#cadeb0 78px 85px,#bbd593 85px 93px,#a9cf73 93px 98px,#a0c962 98px 103px,#97c255 103px 108px,#8fbf45 108px 113px,#83b92d 113px 118px,#76b317 118px)}
.drop{height:12px;background:#5f7d4f;position:absolute;left:12px;right:8px;top:838px}
footer{position:absolute;left:0;right:0;top:851px;height:39px;border-top:1px solid #dedcda;display:flex}
.cname{font-size:15px;margin:12px 0 0 14px;width:114px}
.cadd{margin:12px 0 0 5px}
.drag{position:relative;width:84px;height:40px;margin:9px 0 0 95px;border:2px solid #5f7d4f;border-radius:4px;display:flex;gap:7px;padding:5px 0 0 9px}
.plus{position:absolute;right:-14px;top:-14px;background:#fff;border-radius:50%}
.ftools{display:flex;margin-left:auto;padding:10px 12px 0 0;align-items:center;height:32px}
.ftools .caret{border-width:7px 5.500px 0;border-top-color:#aaa7a4;margin:0 16px 0 8px}
.bolt{margin-left:17px}
.ftools .sep{height:23px;margin:0 14px 4px 16px}
.pb{margin-left:13px}

.over{position:absolute;left:0;top:0}
.note{position:absolute;border:2px solid red;color:red;background:#fff;font:700 13px/16.500px "Liberation Sans",Arial,sans-serif;text-align:center;white-space:nowrap}
.n1{left:75px;top:613px;width:196px;height:39px;background:#f2f0ef;padding-top:2px;font-size:13.500px}
.n2{left:597px;top:631px;width:122px;height:55px;padding-top:9px;font-size:13.300px}
.n2 span{letter-spacing:.9px}
.badge{position:absolute;width:30px;height:30px;border-radius:50%;background:#8b0000;color:#fff;text-align:center;line-height:29px;font-size:16px}
.b1{left:268px;top:581px}.b2{left:706px;top:686px}
```
